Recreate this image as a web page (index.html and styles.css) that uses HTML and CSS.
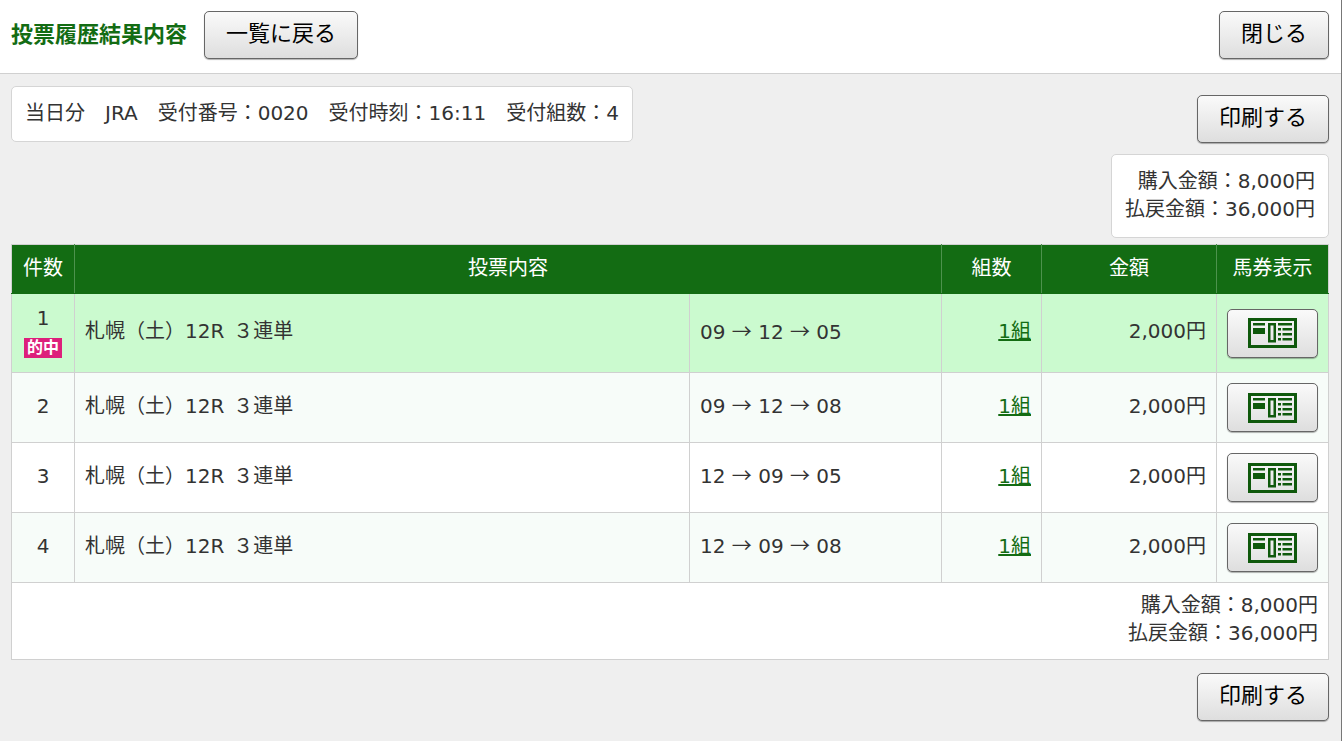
FILE: index.html
```html
<!DOCTYPE html>
<html lang="ja">
<head>
    <meta charset="UTF-8">
    <meta name="viewport" content="width=device-width, initial-scale=1.0">
    <title>投票履歴結果内容</title>
    <link rel="stylesheet" href="styles.css">
</head>
<body>

    <!-- 馬券アイコン -->
    <svg class="sprite" aria-hidden="true">
        <symbol id="ticket" viewBox="0 0 49 30">
            <path fill="none" stroke="#0f590c" stroke-width="3" d="M1.5 1.5h46v27h-46z"/>
            <path fill="#0f590c" d="M5 5h12v2.500H5zM5 10h12v6H5z"/>
            <path fill="none" stroke="#0f590c" stroke-width="2.500" d="M21.250 6.250h5.500v17h-5.500z"/>
            <path fill="#0f590c" d="M30 5h14v2.500H30zM30 10h3v2.500h-3zM34.500 10H44v2.500h-9.500zM30 15h3v2.500h-3zM34.500 15H44v2.500h-9.500zM30 20h3v2.500h-3zM34.500 20H44v2.500h-9.500z"/>
        </symbol>
    </svg>

    <!-- ヘッダー -->
    <header class="header">
        <h1 class="title">投票履歴結果内容</h1>
        <button type="button" class="btn">一覧に戻る</button>
        <button type="button" class="btn btn-close">閉じる</button>
    </header>

    <main class="main">
        <!-- 受付情報 -->
        <div class="info">
            <p class="box">当日分　JRA　受付番号：0020　受付時刻：16:11　受付組数：4</p>
            <button type="button" class="btn btn-print">印刷する</button>
        </div>

        <div class="box total">
            <p>購入金額：8,000円</p>
            <p>払戻金額：36,000円</p>
        </div>

        <!-- 投票一覧 -->
        <table class="list">
            <colgroup>
                <col class="col-no">
                <col>
                <col class="col-num">
                <col class="col-set">
                <col class="col-yen">
                <col class="col-ticket">
            </colgroup>
            <thead>
                <tr>
                    <th>件数</th>
                    <th colspan="2">投票内容</th>
                    <th>組数</th>
                    <th>金額</th>
                    <th>馬券表示</th>
                </tr>
            </thead>
            <tbody>
                <tr class="hit">
                    <td class="no">1<span class="badge">的中</span></td>
                    <td>札幌（土）12R<span class="type">３連単</span></td>
                    <td>09 <span class="arrow">→</span> 12 <span class="arrow">→</span> 05</td>
                    <td class="right"><a href="#">1組</a></td>
                    <td class="right">2,000円</td>
                    <td class="ticket"><button type="button" class="btn btn-ticket" aria-label="馬券表示"><svg><use href="#ticket"/></svg></button></td>
                </tr>
                <tr>
                    <td class="no">2</td>
                    <td>札幌（土）12R<span class="type">３連単</span></td>
                    <td>09 <span class="arrow">→</span> 12 <span class="arrow">→</span> 08</td>
                    <td class="right"><a href="#">1組</a></td>
                    <td class="right">2,000円</td>
                    <td class="ticket"><button type="button" class="btn btn-ticket" aria-label="馬券表示"><svg><use href="#ticket"/></svg></button></td>
                </tr>
                <tr>
                    <td class="no">3</td>
                    <td>札幌（土）12R<span class="type">３連単</span></td>
                    <td>12 <span class="arrow">→</span> 09 <span class="arrow">→</span> 05</td>
                    <td class="right"><a href="#">1組</a></td>
                    <td class="right">2,000円</td>
                    <td class="ticket"><button type="button" class="btn btn-ticket" aria-label="馬券表示"><svg><use href="#ticket"/></svg></button></td>
                </tr>
                <tr>
                    <td class="no">4</td>
                    <td>札幌（土）12R<span class="type">３連単</span></td>
                    <td>12 <span class="arrow">→</span> 09 <span class="arrow">→</span> 08</td>
                    <td class="right"><a href="#">1組</a></td>
                    <td class="right">2,000円</td>
                    <td class="ticket"><button type="button" class="btn btn-ticket" aria-label="馬券表示"><svg><use href="#ticket"/></svg></button></td>
                </tr>
            </tbody>
            <tfoot>
                <tr>
                    <td colspan="6" class="right sum">
                        <p>購入金額：8,000円</p>
                        <p>払戻金額：36,000円</p>
                    </td>
                </tr>
            </tfoot>
        </table>

        <div class="foot">
            <button type="button" class="btn">印刷する</button>
        </div>
    </main>

</body>
</html>
```
FILE: styles.css
```css
*{
    box-sizing: border-box;
}
body{
    min-height: 100vh;
    margin: 0;
    border-right: 1px solid #777;
    background-color: #efefef;
    color: #333;
    font-family: "DejaVu Sans", "Noto Sans CJK JP", sans-serif;
    font-size: 20px;
    line-height: 28px;
}
p{
    margin: 0;
}
.sprite{
    display: none;
}

/* ヘッダー */
.header{
    display: flex;
    align-items: center;
    padding: 11px 12px 14px 11px;
    border-bottom: 1px solid #d0d0d0;
    background-color: #fff;
}
.title{
    margin: 0 17px 0 0;
    color: #136c13;
    font-size: 22px;
}

/* ボタン */
.btn{
    height: 48px;
    padding: 0 21px 3px;
    border: 1px solid #666;
    border-radius: 5px;
    background-image: linear-gradient(to bottom, #fafafa, #dedede);
    box-shadow: 0 1px 1px rgba(0, 0, 0, .3);
    color: #000;
    font-family: inherit;
    font-size: 22px;
    line-height: 28px;
    white-space: nowrap;
}
.btn-close{
    margin-left: auto;
}
.btn-print{
    margin-top: 9px;
}
.btn-ticket{
    display: block;
    width: 100%;
    height: 49px;
    padding: 0;
}
.btn-ticket svg{
    display: block;
    width: 49px;
    height: 30px;
    margin: 0 auto;
}

/* 本文 */
.main{
    padding: 12px 12px 20px 11px;
}
.info{
    display: flex;
    justify-content: space-between;
    align-items: flex-start;
}
.box{
    padding: 12px 13px 14px;
    border: 1px solid #d5d5d5;
    border-radius: 5px;
    background-color: #fff;
}
.total{
    width: fit-content;
    margin: 11px 0 6px auto;
    text-align: right;
}

/* 一覧表 */
.list{
    width: 100%;
    border-collapse: collapse;
    table-layout: fixed;
    background-color: #fff;
}
.col-no{
    width: 63px;
}
.col-num{
    width: 252px;
}
.col-set{
    width: 100px;
}
.col-yen{
    width: 175px;
}
.col-ticket{
    width: 112px;
}
.list th{
    padding: 9px 0 11px;
    border: 1px solid #d0d0d0;
    border-right-color: #4d924d;
    border-bottom-color: #136c13;
    background-color: #136c13;
    color: #fff;
    font-weight: normal;
}
.list th + th{
    border-left-color: #4d924d;
}
.list th:last-child{
    border-right-color: #d0d0d0;
}
.list td{
    padding: 10px 10px 14px;
    border: 1px solid #d0d0d0;
}
.list tbody tr:nth-child(even){
    background-color: #f7fcf9;
}
.list .hit{
    background-color: #cbfacf;
}
.list .no{
    text-align: center;
}
.list .right{
    text-align: right;
}
.list .ticket{
    padding: 10px;
}
.list .sum{
    padding: 8px 10px 12px;
}
.list a{
    color: #136c13;
}
.badge{
    display: block;
    width: 38px;
    height: 20px;
    margin: 6px auto 0;
    background-color: #dd1f7b;
    color: #fff;
    font-size: 16px;
    font-weight: bold;
    line-height: 20px;
}
.type{
    margin-left: 9px;
}
.arrow{
    font-family: "Noto Sans CJK JP", sans-serif;
}

.foot{
    display: flex;
    justify-content: flex-end;
    margin-top: 13px;
}
```
